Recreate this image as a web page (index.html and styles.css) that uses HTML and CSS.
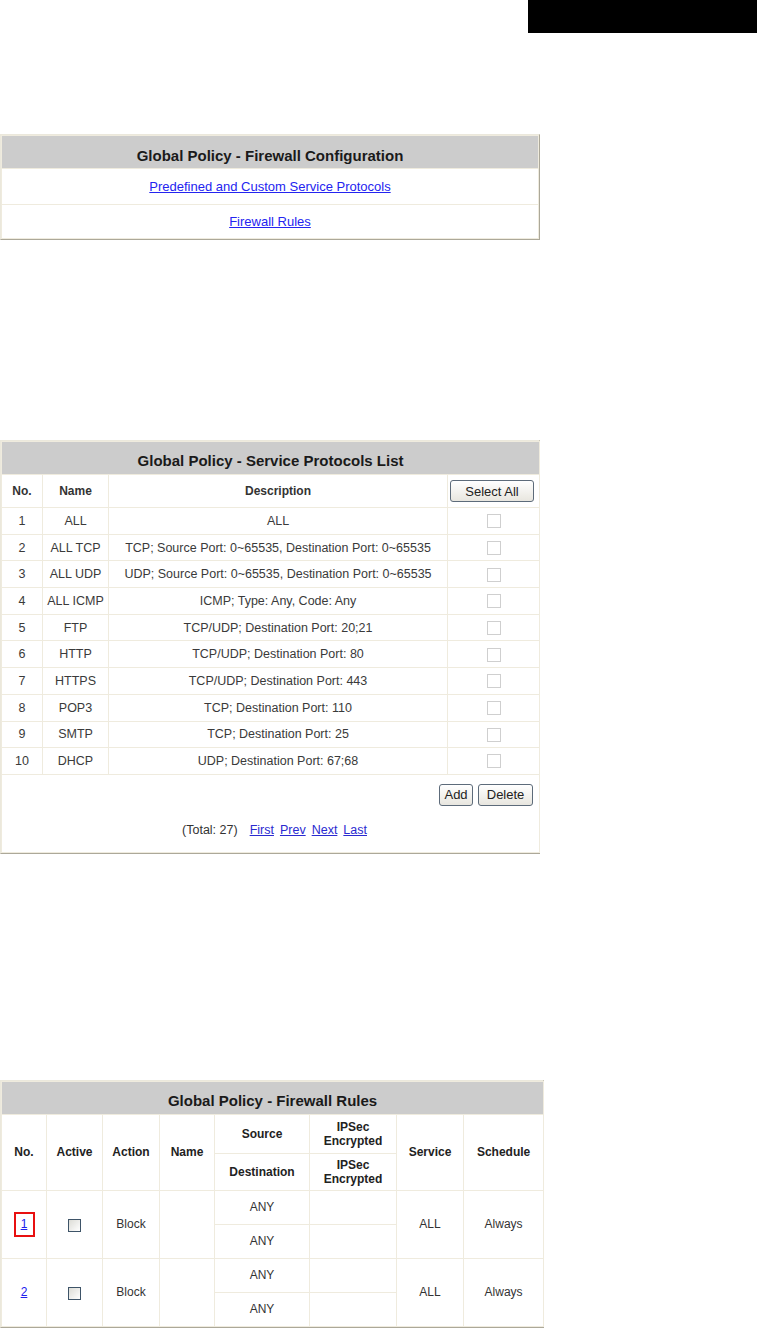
FILE: index.html
```html
<!DOCTYPE html>
<html>
<head>
<meta charset="utf-8">
<link rel="stylesheet" href="styles.css">
</head>
<body>
<div class="topbar"></div>

<div class="frame frame1">
  <table class="grid t1">
    <tr class="hd"><th>Global Policy - Firewall Configuration</th></tr>
    <tr class="r1"><td><a href="#">Predefined and Custom Service Protocols</a></td></tr>
    <tr class="r2"><td><a href="#">Firewall Rules</a></td></tr>
  </table>
</div>

<div class="frame frame2">
  <table class="grid t2">
    <colgroup><col class="c1"><col class="c2"><col class="c3"><col class="c4"></colgroup>
    <tr class="hd"><th colspan="4">Global Policy - Service Protocols List</th></tr>
    <tr class="colhd"><th>No.</th><th>Name</th><th>Description</th><th><button class="btn sel">Select All</button></th></tr>
    <tr><td>1</td><td>ALL</td><td>ALL</td><td><input type="checkbox" class="cb"></td></tr>
    <tr><td>2</td><td>ALL TCP</td><td>TCP; Source Port: 0~65535, Destination Port: 0~65535</td><td><input type="checkbox" class="cb"></td></tr>
    <tr><td>3</td><td>ALL UDP</td><td>UDP; Source Port: 0~65535, Destination Port: 0~65535</td><td><input type="checkbox" class="cb"></td></tr>
    <tr><td>4</td><td>ALL ICMP</td><td>ICMP; Type: Any, Code: Any</td><td><input type="checkbox" class="cb"></td></tr>
    <tr><td>5</td><td>FTP</td><td>TCP/UDP; Destination Port: 20;21</td><td><input type="checkbox" class="cb"></td></tr>
    <tr><td>6</td><td>HTTP</td><td>TCP/UDP; Destination Port: 80</td><td><input type="checkbox" class="cb"></td></tr>
    <tr><td>7</td><td>HTTPS</td><td>TCP/UDP; Destination Port: 443</td><td><input type="checkbox" class="cb"></td></tr>
    <tr><td>8</td><td>POP3</td><td>TCP; Destination Port: 110</td><td><input type="checkbox" class="cb"></td></tr>
    <tr><td>9</td><td>SMTP</td><td>TCP; Destination Port: 25</td><td><input type="checkbox" class="cb"></td></tr>
    <tr><td>10</td><td>DHCP</td><td>UDP; Destination Port: 67;68</td><td><input type="checkbox" class="cb"></td></tr>
    <tr class="foot"><td colspan="4">
      <div class="actions"><button class="btn add">Add</button><button class="btn del">Delete</button></div>
      <div class="pager">(Total: 27)<a href="#">First</a><a href="#">Prev</a><a href="#">Next</a><a href="#">Last</a></div>
    </td></tr>
  </table>
</div>

<div class="frame frame3">
  <table class="grid t3">
    <colgroup><col class="d1"><col class="d2"><col class="d3"><col class="d4"><col class="d5"><col class="d6"><col class="d7"><col class="d8"></colgroup>
    <tr class="hd"><th colspan="8">Global Policy - Firewall Rules</th></tr>
    <tr class="sh1"><th rowspan="2">No.</th><th rowspan="2">Active</th><th rowspan="2">Action</th><th rowspan="2">Name</th><th>Source</th><th>IPSec<br>Encrypted</th><th rowspan="2">Service</th><th rowspan="2">Schedule</th></tr>
    <tr class="sh2"><th>Destination</th><th>IPSec<br>Encrypted</th></tr>
    <tr class="dr"><td rowspan="2"><a href="#" class="boxed">1</a></td><td rowspan="2"><input type="checkbox" class="cb2"></td><td rowspan="2">Block</td><td rowspan="2"></td><td class="any">ANY</td><td></td><td rowspan="2" class="any">ALL</td><td rowspan="2" class="any">Always</td></tr>
    <tr class="dr"><td class="any">ANY</td><td></td></tr>
    <tr class="dr"><td rowspan="2"><a href="#" class="num">2</a></td><td rowspan="2"><input type="checkbox" class="cb2"></td><td rowspan="2">Block</td><td rowspan="2"></td><td class="any">ANY</td><td></td><td rowspan="2" class="any">ALL</td><td rowspan="2" class="any">Always</td></tr>
    <tr class="dr"><td class="any">ANY</td><td></td></tr>
  </table>
</div>
</body>
</html>
```

FILE: styles.css
```css
html, body {
  margin: 0;
  padding: 0;
  background: #ffffff;
  font-family: "Liberation Sans", Arial, sans-serif;
  font-size: 12px;
  color: #333333;
}

.topbar {
  height: 33px;
  width: 229px;
  margin-left: 528px;
  background: #000000;
}

.frame {
  border: 1px solid;
  border-color: #ebe8dc #aca899 #aca899 #ebe8dc;
  box-sizing: border-box;
}

.frame1 { width: 540px; margin-top: 101px; }
.frame2 { width: 540px; margin-top: 200px; }
.frame3 { width: 544px; margin-top: 226px; }

.grid {
  width: 100%;
  border-collapse: collapse;
  table-layout: fixed;
}

.grid th,
.grid td {
  border: 1px solid #efebde;
  text-align: center;
  vertical-align: middle;
  padding: 0;
}

.grid th {
  font-weight: bold;
  color: #222222;
}

.grid .hd th {
  background: #cccccc;
  font-size: 15px;
  color: #1a1a1a;
  height: 33px;
  padding-top: 5px;
  box-sizing: border-box;
}

.t1 .hd th { height: 33px; padding-top: 6px; }
.t1 .r1 td { height: 35px; }
.t1 .r2 td { height: 33px; }

.t1 a {
  color: #2424f0;
  font-size: 13px;
}

/* service protocols */
.c1 { width: 41px; }
.c2 { width: 66px; }
.c3 { width: 339px; }
.c4 { width: 92px; }

.t2 .colhd th {
  height: 32px;
  font-size: 12px;
  color: #333333;
}

.t2 td {
  height: 25.7px;
  font-size: 12.5px;
  color: #3a3a3a;
}

.btn {
  font-family: "Liberation Sans", Arial, sans-serif;
  font-size: 13px;
  color: #222222;
  background: linear-gradient(#ffffff, #e8e6df);
  border: 1px solid #5d6b7a;
  border-radius: 3px;
  height: 22px;
  padding: 0 6px;
  box-sizing: border-box;
}

.sel { width: 84px; margin-right: 3px; }
.add { width: 34px; padding: 0; }
.del { width: 55px; padding: 0; margin-left: 5px; }

.cb {
  appearance: none;
  -webkit-appearance: none;
  width: 14px;
  height: 14px;
  margin: 0;
  border: 1px solid #cfcfcf;
  background: #ffffff;
  vertical-align: middle;
}

.t2 .foot td {
  height: 77px;
  vertical-align: top;
}

.actions {
  display: flex;
  justify-content: flex-end;
  padding: 9px 6px 0 0;
}

.pager {
  margin-top: 17px;
  color: #333333;
  text-align: center;
  padding-left: 8px;
}

.pager a {
  color: #2a2ad0;
  margin-left: 6px;
}

.pager a:first-child { margin-left: 12px; }

/* firewall rules */
.d1 { width: 45px; }
.d2 { width: 56px; }
.d3 { width: 57px; }
.d4 { width: 55px; }
.d5 { width: 95px; }
.d6 { width: 87px; }
.d7 { width: 67px; }
.d8 { width: 80px; }

.t3 .sh1 th { height: 38px; font-size: 12px; }
.t3 .sh2 th { height: 36px; font-size: 12px; }

.t3 .dr td {
  height: 33px;
  color: #333333;
}

.t3 .any { color: #444444; }

.boxed {
  display: inline-block;
  width: 17px;
  height: 21px;
  line-height: 21px;
  border: 2px solid #e81010;
  color: #2020ee;
}

.num { color: #2020ee; }

.cb2 {
  appearance: none;
  -webkit-appearance: none;
  width: 13px;
  height: 13px;
  margin: 0;
  border: 1px solid #3e5468;
  background: linear-gradient(135deg, #dcdcd6, #ffffff);
  vertical-align: middle;
}
```
